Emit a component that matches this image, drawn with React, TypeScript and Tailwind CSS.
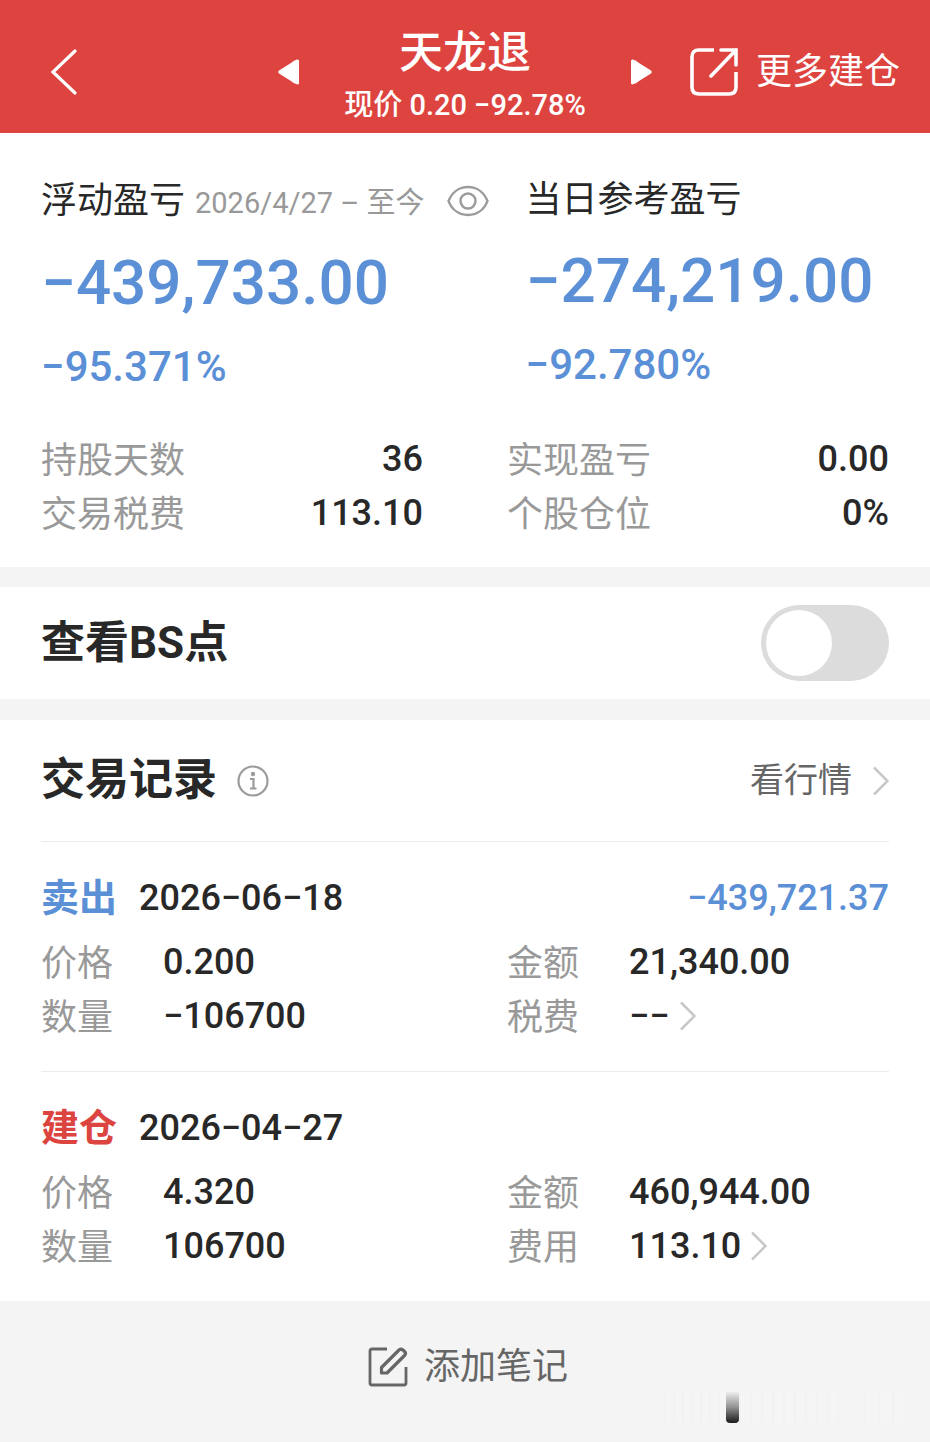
import { useState } from "react";

type Trade = {
  type: string;
  tone: string;
  date: string;
  profit?: string;
  price: string;
  amount: string;
  quantity: string;
  feeLabel: string;
  fee: string;
};

const trades: Trade[] = [
  {
    type: "卖出",
    tone: "text-[#5b8fd6]",
    date: "2026−06−18",
    profit: "−439,721.37",
    price: "0.200",
    amount: "21,340.00",
    quantity: "−106700",
    feeLabel: "税费",
    fee: "−−",
  },
  {
    type: "建仓",
    tone: "text-[#dc443f]",
    date: "2026−04−27",
    price: "4.320",
    amount: "460,944.00",
    quantity: "106700",
    feeLabel: "费用",
    fee: "113.10",
  },
];

const stats = [
  { label: "持股天数", value: "36" },
  { label: "实现盈亏", value: "0.00" },
  { label: "交易税费", value: "113.10" },
  { label: "个股仓位", value: "0%" },
];

function Chevron() {
  return (
    <svg className="w-4 h-[30px] shrink-0" viewBox="0 0 16 30" fill="none" stroke="#c8c8c8" strokeWidth="2.5">
      <path d="M1 1.5L14.5 15L1 28.5" />
    </svg>
  );
}

function Header() {
  return (
    <header className="grid grid-cols-[1fr_auto_1fr] items-center bg-[#dd4440] text-white pt-[11px]">
      <button type="button" aria-label="返回" className="justify-self-start pl-[50px]">
        <svg className="w-7 h-12" viewBox="0 0 28 48" fill="none" stroke="currentColor" strokeWidth="3.2" strokeLinecap="round">
          <path d="M25 3L3 24L25 45" />
        </svg>
      </button>

      <div className="flex items-center justify-between w-[374px]">
        <button type="button" aria-label="上一个">
          <svg className="w-[21px] h-[26px]" viewBox="0 0 21 26" fill="currentColor">
            <path d="M19 .5Q21 0 21 2V24Q21 26 19 25.3Q16 25 13 22L1 14.5Q-.5 13 1 11.5L13 4Q16 1 19 .5Z" />
          </svg>
        </button>
        <div className="text-center pt-4 pb-[2px]">
          <h1 className="text-[44px] leading-[52px] font-medium">天龙退</h1>
          <p className="text-[29px] leading-[52px] font-medium">现价 0.20 −92.78%</p>
        </div>
        <button type="button" aria-label="下一个">
          <svg className="w-[21px] h-[26px]" viewBox="0 0 21 26" fill="currentColor">
            <path d="M2 .5Q0 0 0 2V24Q0 26 2 25.3Q5 25 8 22L20 14.5Q21.5 13 20 11.5L8 4Q5 1 2 .5Z" />
          </svg>
        </button>
      </div>

      <button type="button" className="justify-self-end flex items-center gap-[18px] pr-[30px] text-[36px] leading-[54px]">
        <svg className="w-12 h-12" viewBox="0 0 48 48" fill="none" stroke="currentColor" strokeWidth="3.6">
          <path d="M24 2H9Q2 2 2 9V39Q2 46 9 46H39Q46 46 46 39V24" />
          <path d="M31 2H46V17M46 2L21 28" strokeLinecap="round" />
        </svg>
        更多建仓
      </button>
    </header>
  );
}

function TradeItem({ trade }: { trade: Trade }) {
  return (
    <li className="pt-[26px] pb-7 border-t border-[#ececec]">
      <div className="flex items-center text-[36px] leading-[60px]">
        <span className={`text-[38px] font-bold ${trade.tone}`}>{trade.type}</span>
        <span className="ml-[22px] font-medium">{trade.date}</span>
        {trade.profit && <span className="ml-auto font-medium text-[#5b8fd6]">{trade.profit}</span>}
      </div>
      <dl className="mt-[7px] grid auto-rows-[54px] grid-cols-2 gap-x-[84px] text-[36px] leading-[54px]">
        <div className="flex">
          <dt className="w-[122px] leading-[58px] text-[#999999]">价格</dt>
          <dd className="font-medium">{trade.price}</dd>
        </div>
        <div className="flex">
          <dt className="w-[122px] leading-[58px] text-[#999999]">金额</dt>
          <dd className="font-medium">{trade.amount}</dd>
        </div>
        <div className="flex">
          <dt className="w-[122px] leading-[58px] text-[#999999]">数量</dt>
          <dd className="font-medium">{trade.quantity}</dd>
        </div>
        <div className="flex">
          <dt className="w-[122px] leading-[58px] text-[#999999]">{trade.feeLabel}</dt>
          <dd className="font-medium">
            <button type="button" className="flex items-center gap-[10px]">
              {trade.fee}
              <Chevron />
            </button>
          </dd>
        </div>
      </dl>
    </li>
  );
}

export default function App() {
  const [showPoints, setShowPoints] = useState(false);

  return (
    <div className="min-h-screen bg-[#f4f4f4] font-['Roboto','Noto_Sans_CJK_SC',sans-serif] text-[#282828]" lang="zh-CN">
      <Header />

      <main>
        {/* Profit summary */}
        <section className="bg-white px-[41px] pt-10 pb-[27px]">
          <div className="grid grid-cols-[4fr_3fr]">
            <div>
              <div className="flex h-14 items-center leading-[56px]">
                <h2 className="text-[36px]">浮动盈亏</h2>
                <span className="ml-[10px] pt-1 text-[29px] text-[#999999] whitespace-nowrap">2026/4/27 – 至今</span>
                <button type="button" aria-label="隐藏金额" className="ml-[23px]">
                  <svg className="w-[42px] h-[32px]" viewBox="0 0 42 32" fill="none" stroke="#9b9b9b" strokeWidth="2.4">
                    <path d="M1.5 16C5 7 12.5 2 21 2S37 7 40.5 16C37 25 29.5 30 21 30S5 25 1.5 16Z" />
                    <circle cx="21" cy="16" r="7.5" />
                  </svg>
                </button>
              </div>
              <p className="mt-[18px] text-[62px] leading-[72px] font-medium text-[#5b8fd6]">−439,733.00</p>
              <p className="mt-6 text-[42px] leading-[48px] font-medium text-[#5b8fd6]">−95.371%</p>
            </div>
            <div>
              <h2 className="text-[36px] leading-[54px]">当日参考盈亏</h2>
              <p className="mt-[18px] text-[62px] leading-[72px] font-medium text-[#5b8fd6]">−274,219.00</p>
              <p className="mt-6 text-[42px] leading-[48px] font-medium text-[#5b8fd6]">−92.780%</p>
            </div>
          </div>

          <dl className="mt-[41px] grid auto-rows-[54px] grid-cols-2 gap-x-[84px] text-[36px] leading-[54px]">
            {stats.map((item) => (
              <div key={item.label} className="flex justify-between">
                <dt className="leading-[58px] text-[#999999]">{item.label}</dt>
                <dd className="font-medium">{item.value}</dd>
              </div>
            ))}
          </dl>
        </section>

        {/* BS points switch */}
        <section className="mt-5 flex items-center justify-between bg-white px-[41px] py-[18px]">
          <label htmlFor="bs-points" className="text-[44px] leading-[76px] font-bold">查看BS点</label>
          <input
            id="bs-points"
            type="checkbox"
            role="switch"
            checked={showPoints}
            onChange={(e) => setShowPoints(e.target.checked)}
            className="appearance-none w-32 h-[76px] rounded-full bg-[#dcdcdc] p-[5px] cursor-pointer transition-colors checked:bg-[#dd4440] before:block before:size-[66px] before:rounded-full before:bg-white before:transition-transform checked:before:translate-x-[52px]"
          />
        </section>

        {/* Trade history */}
        <section className="mt-[21px] bg-white px-[41px]">
          <div className="flex items-center leading-[121px]">
            <h2 className="text-[44px] font-bold">交易记录</h2>
            <button type="button" aria-label="说明" className="ml-5">
              <svg className="size-8" viewBox="0 0 32 32" fill="none" stroke="#9b9b9b" strokeWidth="2.2">
                <circle cx="16" cy="16" r="14.5" />
                <circle cx="16" cy="9" r="2.2" fill="#9b9b9b" stroke="none" />
                <path d="M13 14H16.5V23M13 23.5H19.5" />
              </svg>
            </button>
            <a href="#quotes" className="ml-auto flex items-center gap-[21px] text-[34px] text-[#666666]">
              看行情
              <Chevron />
            </a>
          </div>
          <ul>
            {trades.map((trade) => (
              <TradeItem key={trade.date} trade={trade} />
            ))}
          </ul>
        </section>
      </main>

      <footer className="relative flex justify-center pt-[39px] pb-[48px]">
        <button type="button" className="flex items-center gap-4 pl-[6px] text-[36px] leading-[54px] text-[#666666]">
          <svg className="size-10" viewBox="0 0 40 40" fill="none" stroke="currentColor" strokeWidth="2.8" strokeLinejoin="round">
            <path d="M19 2H4Q2 2 2 4V36Q2 38 4 38H36Q38 38 38 36V20" />
            <path d="M13.5 26V20.5L31 3Q33 1.500 35 3L36.500 4.500Q38.500 6.500 36.500 8.500L19 26Z" strokeWidth="3.2" />
          </svg>
          添加笔记
        </button>
        <div className="absolute right-[26px] bottom-[19px] flex h-[31px] w-[240px] items-stretch" aria-hidden="true">
          <div className="w-[62px] bg-[repeating-linear-gradient(90deg,#f2f2f2_0_2px,#f5f5f5_2px_9px)]" />
          <div className="w-[13px] rounded-b-sm bg-linear-to-b from-[#eeeeee] via-[#909090] to-[#1c1c1c]" />
          <div className="w-[97px] bg-[repeating-linear-gradient(90deg,#f2f2f2_0_2px,#f5f5f5_2px_11px)]" />
          <div className="ml-[28px] w-[40px] bg-[repeating-linear-gradient(90deg,#f2f2f2_0_2px,#f5f5f5_2px_14px)]" />
        </div>
      </footer>
    </div>
  );
}
